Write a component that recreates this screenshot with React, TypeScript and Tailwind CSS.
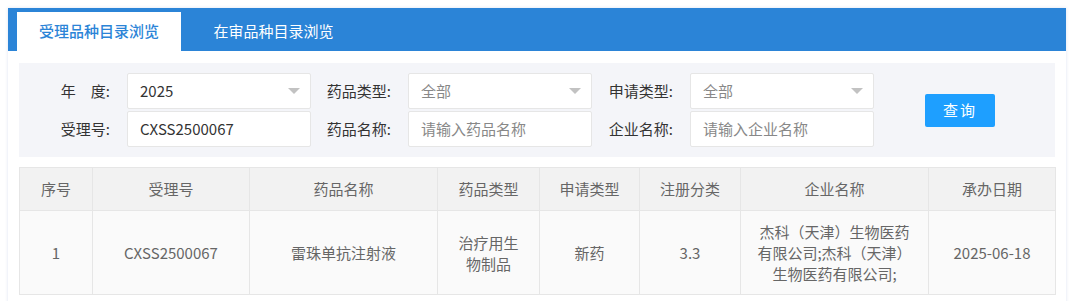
const font = { fontFamily: '"Microsoft YaHei", "Noto Sans CJK SC", "Noto Sans", sans-serif' };

export default function App() {
  return (
    <div className="w-[1080px] h-[301px] bg-white overflow-hidden pl-2 pt-2" style={font}>
      <div className="w-[1058px] h-[300px] bg-white shadow-[0_0_3px_rgba(120,140,200,0.25)]">
        {/* tabs */}
        <div className="h-[43px] bg-[#2b84d7] flex items-end pl-[9px]">
          <div className="w-[164px] h-[39px] bg-white flex items-center justify-center text-[15px] font-medium text-[#2b84d7]">
            受理品种目录浏览
          </div>
          <div className="w-[185px] h-[39px] flex items-center justify-center text-[15px] text-white">
            在审品种目录浏览
          </div>
        </div>

        {/* filter */}
        <div className="mx-[11px] mt-3 h-[94px] bg-[#f4f5f9] flex items-center">
          <div className="flex flex-col gap-[2px]">
            <div className="flex items-center">
              <Label w="w-[108px]">年　度:</Label>
              <Select value="2025" dark />
              <Label w="w-[97px]">药品类型:</Label>
              <Select value="全部" />
              <Label w="w-[98px]">申请类型:</Label>
              <Select value="全部" />
            </div>
            <div className="flex items-center">
              <Label w="w-[108px]">受理号:</Label>
              <Input value="CXSS2500067" dark />
              <Label w="w-[97px]">药品名称:</Label>
              <Input value="请输入药品名称" />
              <Label w="w-[98px]">企业名称:</Label>
              <Input value="请输入企业名称" />
            </div>
          </div>
          <button className="ml-[51px] w-[70px] h-[33px] rounded-[2px] bg-[#1e9fff] text-white text-[15px] tracking-[2px]">
            查询
          </button>
        </div>

        {/* table */}
        <table className="mx-[11px] mt-[10px] w-[1036px] border-collapse text-[15px] text-[#666] table-fixed">
          <colgroup>
            <col className="w-[73px]" />
            <col className="w-[157px]" />
            <col className="w-[188px]" />
            <col className="w-[102px]" />
            <col className="w-[100px]" />
            <col className="w-[101px]" />
            <col className="w-[188px]" />
            <col className="w-[127px]" />
          </colgroup>
          <thead>
            <tr className="h-[43px] bg-[#f2f2f2]">
              {["序号", "受理号", "药品名称", "药品类型", "申请类型", "注册分类", "企业名称", "承办日期"].map((h) => (
                <th key={h} className="border border-[#e6e6e6] font-normal text-center">
                  {h}
                </th>
              ))}
            </tr>
          </thead>
          <tbody>
            <tr className="h-[84px] bg-[#fafafa] text-center leading-[21px]">
              <td className="border border-[#e6e6e6]">1</td>
              <td className="border border-[#e6e6e6]">CXSS2500067</td>
              <td className="border border-[#e6e6e6]">雷珠单抗注射液</td>
              <td className="border border-[#e6e6e6] px-[15px]">治疗用生物制品</td>
              <td className="border border-[#e6e6e6]">新药</td>
              <td className="border border-[#e6e6e6]">3.3</td>
              <td className="border border-[#e6e6e6] px-[15px] break-all">
                杰科（天津）生物医药有限公司;杰科（天津）生物医药有限公司;
              </td>
              <td className="border border-[#e6e6e6]">2025-06-18</td>
            </tr>
          </tbody>
        </table>
      </div>
    </div>
  );
}

function Label({ w, children }: { w: string; children: React.ReactNode }) {
  return (
    <div className={`${w} pr-[17px] text-right text-[15px] text-[#333] shrink-0`}>{children}</div>
  );
}

function Select({ value, dark }: { value: string; dark?: boolean }) {
  return (
    <div className="w-[184px] h-[36px] bg-white border border-[#e6e6e6] rounded-[2px] flex items-center justify-between pl-[12px] pr-[10px]">
      <span className={`text-[15px] ${dark ? "text-[#333]" : "text-[#888]"}`}>{value}</span>
      <span className="w-0 h-0 border-x-[6px] border-x-transparent border-t-[6px] border-t-[#c2c2c2]" />
    </div>
  );
}

function Input({ value, dark }: { value: string; dark?: boolean }) {
  return (
    <div className="w-[184px] h-[36px] bg-white border border-[#e6e6e6] rounded-[2px] flex items-center pl-[12px]">
      <span className={`text-[15px] ${dark ? "text-[#333]" : "text-[#888]"}`}>{value}</span>
    </div>
  );
}
